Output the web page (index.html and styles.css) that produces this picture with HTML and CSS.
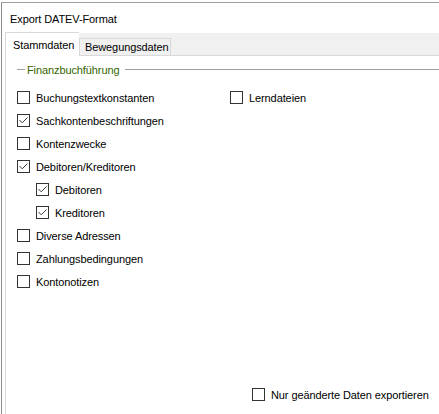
FILE: index.html
```html
<!DOCTYPE html>
<html>
<head>
<meta charset="utf-8">
<link rel="stylesheet" href="styles.css">
</head>
<body>
<div class="window">
  <div class="title">Export DATEV-Format</div>
  <div class="tabstrip">
    <div class="tab active">Stammdaten</div>
    <div class="tab">Bewegungsdaten</div>
  </div>
  <div class="tabpage">
    <div class="group-header">
      <span class="gline short"></span>
      <span class="glabel">Finanzbuchführung</span>
      <span class="gline long"></span>
    </div>
    <div class="columns">
      <div class="col left">
        <div class="row"><span class="box"></span><span class="lbl">Buchungstextkonstanten</span></div>
        <div class="row"><span class="box checked"><svg viewBox="0 0 11 11"><polyline points="1.5,5 4.2,7.8 9.5,2.5"/></svg></span><span class="lbl">Sachkontenbeschriftungen</span></div>
        <div class="row"><span class="box"></span><span class="lbl">Kontenzwecke</span></div>
        <div class="row"><span class="box checked"><svg viewBox="0 0 11 11"><polyline points="1.5,5 4.2,7.8 9.5,2.5"/></svg></span><span class="lbl">Debitoren/Kreditoren</span></div>
        <div class="row sub"><span class="box checked"><svg viewBox="0 0 11 11"><polyline points="1.5,5 4.2,7.8 9.5,2.5"/></svg></span><span class="lbl">Debitoren</span></div>
        <div class="row sub"><span class="box checked"><svg viewBox="0 0 11 11"><polyline points="1.5,5 4.2,7.8 9.5,2.5"/></svg></span><span class="lbl">Kreditoren</span></div>
        <div class="row"><span class="box"></span><span class="lbl">Diverse Adressen</span></div>
        <div class="row"><span class="box"></span><span class="lbl">Zahlungsbedingungen</span></div>
        <div class="row"><span class="box"></span><span class="lbl">Kontonotizen</span></div>
      </div>
      <div class="col right">
        <div class="row"><span class="box"></span><span class="lbl">Lerndateien</span></div>
      </div>
    </div>
    <div class="footer">
      <div class="row"><span class="box"></span><span class="lbl">Nur geänderte Daten exportieren</span></div>
    </div>
  </div>
</div>
</body>
</html>
```

FILE: styles.css
```css
* { box-sizing: border-box; }
html, body {
  margin: 0;
  padding: 0;
  width: 439px;
  height: 414px;
  overflow: hidden;
  background: #ffffff;
  font-family: "Liberation Sans", Arial, sans-serif;
  font-size: 11px;
  letter-spacing: -0.1px;
  color: #000;
}
.window {
  margin-top: 2px;
  margin-left: 1px;
  height: 412px;
  border-top: 1px solid #a0a0a0;
  border-left: 1px solid #8c8c8c;
  display: flex;
  flex-direction: column;
}
.title {
  height: 30px;
  padding-left: 8px;
  padding-top: 2px;
  display: flex;
  align-items: center;
}
.tabstrip {
  height: 23px;
  margin-left: 3px;
  background: #f0f0f0;
  display: flex;
  align-items: flex-end;
  border-bottom: 1px solid #d9d9d9;
}
.tab {
  width: 92px;
  height: 17px;
  padding: 0 4px 0 5px;
  border: 1px solid #d9d9d9;
  border-bottom: none;
  background: #f0f0f0;
  display: flex;
  align-items: center;
}
.tab.active {
  width: 74px;
  height: 24px;
  background: #fff;
  padding: 0 0 0 7px;
  margin-bottom: -1px;
  border-right: none;
}
.tabpage {
  flex: 1;
  margin-left: 3px;
  border-left: 1px solid #d9d9d9;
  display: flex;
  flex-direction: column;
  background: #fff;
}
.group-header {
  height: 13px;
  margin-top: 7px;
  display: flex;
  align-items: center;
  padding-left: 11px;
}
.gline {
  height: 1px;
  background: #a0a0a0;
}
.gline.short { width: 8px; }
.gline.long { flex: 1; }
.glabel {
  color: #356600;
  padding: 0 6px 0 2px;
}
.columns {
  margin-top: 10px;
  display: grid;
  grid-template-columns: 213px 1fr;
  padding-left: 11px;
}
.row {
  height: 23px;
  display: flex;
  align-items: center;
  gap: 6px;
}
.row.sub { padding-left: 19px; }
.box {
  width: 13px;
  height: 13px;
  border: 1px solid #333;
  background: #fff;
  flex: none;
  display: block;
}
.box svg {
  display: block;
  width: 11px;
  height: 11px;
}
.box svg polyline {
  fill: none;
  stroke: #3a3a3a;
  stroke-width: 1;
}
.footer {
  margin-top: 90px;
  padding-left: 246px;
}
```
